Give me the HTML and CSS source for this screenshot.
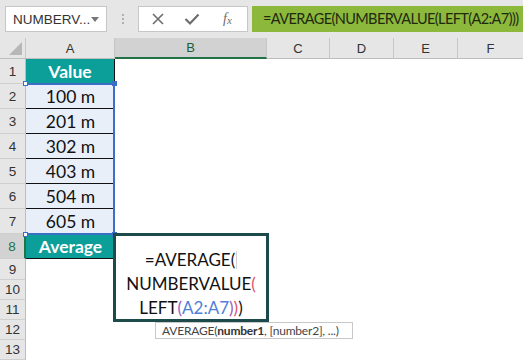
FILE: index.html
```html
<!DOCTYPE html>
<html>
<head>
<meta charset="utf-8">
<link rel="stylesheet" href="styles.css">
</head>
<body>
<div class="app">
  <div class="toolbar">
    <div class="namebox"><span class="nb-text">NUMBERV...</span><span class="nb-arrow"></span></div>
    <div class="grip"><i></i><i></i><i></i></div>
    <div class="iconbox">
      <svg class="ic" width="14" height="14" viewBox="0 0 14 14"><path d="M2 2 L12 12 M12 2 L2 12" stroke="#6d6d6d" stroke-width="1.6" fill="none"/></svg>
      <svg class="ic" width="16" height="14" viewBox="0 0 16 14"><path d="M1.5 7 L6 11.5 L14.5 2.5" stroke="#6d6d6d" stroke-width="2.2" fill="none"/></svg>
      <span class="fx">f<sub>x</sub></span>
    </div>
    <div class="formula">=AVERAGE(NUMBERVALUE(LEFT(A2:A7)))</div>
  </div>
  <div class="sheet">
    <div class="grid">
      <div class="ch corner"><span class="tri"></span></div><div class="ch">A</div><div class="ch active">B</div><div class="ch">C</div><div class="ch">D</div><div class="ch">E</div><div class="ch last">F</div>

      <div class="rh">1</div><div class="c a head hr">Value</div><div class="c"></div><div class="c"></div><div class="c"></div><div class="c"></div><div class="c"></div>
      <div class="rh">2</div><div class="c a data line">100 m</div><div class="c"></div><div class="c"></div><div class="c"></div><div class="c"></div><div class="c"></div>
      <div class="rh">3</div><div class="c a data line">201 m</div><div class="c"></div><div class="c"></div><div class="c"></div><div class="c"></div><div class="c"></div>
      <div class="rh">4</div><div class="c a data line">302 m</div><div class="c"></div><div class="c"></div><div class="c"></div><div class="c"></div><div class="c"></div>
      <div class="rh">5</div><div class="c a data line">403 m</div><div class="c"></div><div class="c"></div><div class="c"></div><div class="c"></div><div class="c"></div>
      <div class="rh">6</div><div class="c a data line">504 m</div><div class="c"></div><div class="c"></div><div class="c"></div><div class="c"></div><div class="c"></div>
      <div class="rh">7</div><div class="c a data">605 m</div><div class="c"></div><div class="c"></div><div class="c"></div><div class="c"></div><div class="c"></div>
      <div class="rh active">8</div><div class="c a head line">Average</div><div class="c"></div><div class="c"></div><div class="c"></div><div class="c"></div><div class="c"></div>
      <div class="rh">9</div><div class="c"></div><div class="c"></div><div class="c"></div><div class="c"></div><div class="c"></div><div class="c"></div>
      <div class="rh">10</div><div class="c"></div><div class="c"></div><div class="c"></div><div class="c"></div><div class="c"></div><div class="c"></div>
      <div class="rh">11</div><div class="c"></div><div class="c"></div><div class="c"></div><div class="c"></div><div class="c"></div><div class="c"></div>
      <div class="rh">12</div><div class="c"></div><div class="c"></div><div class="c"></div><div class="c"></div><div class="c"></div><div class="c"></div>
      <div class="rh">13</div><div class="c"></div><div class="c"></div><div class="c"></div><div class="c"></div><div class="c"></div><div class="c"></div>
    </div>

    <div class="sel">
      <span class="hd tl"></span><span class="hd tr"></span><span class="hd bl"></span><span class="hd br"></span>
    </div>

    <div class="editbox">
      <div class="eline">=AVERAGE(<span class="caret"></span></div>
      <div class="eline">NUMBERVALUE<span class="p-red">(</span></div>
      <div class="eline">LEFT<span class="p-purple">(</span><span class="ref">A2:A7</span><span class="p-purple">)</span><span class="p-red">)</span>)</div>
    </div>

    <div class="tip">AVERAGE(<b>number1</b>, [number2], ...)</div>
  </div>
</div>
</body>
</html>
```

FILE: styles.css
```css
* { box-sizing: border-box; }
html, body { margin: 0; padding: 0; }
body {
  width: 523px;
  height: 360px;
  overflow: hidden;
  background: #ffffff;
  font-family: "Lato", "Liberation Sans", sans-serif;
}
.app { width: 523px; height: 360px; display: flex; flex-direction: column; }

.toolbar {
  height: 40px;
  background: #e6e6e6;
  display: flex;
  align-items: flex-start;
  padding-top: 6px;
  padding-left: 5px;
}
.namebox {
  width: 102px;
  height: 26px;
  background: #fff;
  border: 1px solid #c6c6c6;
  display: flex;
  align-items: center;
  padding-left: 7px;
  font-family: "Liberation Sans", sans-serif;
  font-size: 13.5px;
  color: #333;
}
.nb-text { flex: 1; }
.nb-arrow {
  width: 0; height: 0;
  border-left: 4px solid transparent;
  border-right: 4px solid transparent;
  border-top: 5px solid #777;
  margin-right: 7px;
}
.grip {
  width: 31px;
  height: 26px;
  display: flex;
  flex-direction: column;
  align-items: center;
  justify-content: center;
  gap: 2px;
}
.grip i { display: block; width: 2px; height: 2px; background: #b0b0b0; }
.iconbox {
  width: 110px;
  height: 26px;
  background: #fff;
  border: 1px solid #c6c6c6;
  display: flex;
  align-items: center;
  padding-left: 12px;
}
.ic { display: block; }
.iconbox .ic:first-child { margin-right: 19px; }
.iconbox .ic:nth-child(2) { margin-right: 23px; }
.fx {
  font-family: "Liberation Serif", serif;
  font-style: italic;
  font-size: 14px;
  color: #6d6d6d;
  line-height: 1;
}
.fx sub { font-size: 11px; vertical-align: -1px; }
.formula {
  flex: 1;
  height: 26px;
  margin-left: 4px;
  background: #8cb83c;
  color: #1e2a10;
  font-family: "Lato", sans-serif;
  font-size: 14.5px;
  letter-spacing: -0.6px;
  line-height: 26px;
  padding-left: 11px;
  white-space: nowrap;
  overflow: hidden;
}

.sheet { position: relative; flex: 1; }
.grid {
  display: grid;
  grid-template-columns: 26px 89px 152px 63px 64px 64px 65px;
  grid-template-rows: 21px repeat(8, 25px) 21px repeat(4, 20px);
}
.ch {
  background: #e6e6e6;
  border-right: 1px solid #c6c6c6;
  border-bottom: 1px solid #bdbdbd;
  font-family: "Liberation Sans", sans-serif;
  font-size: 13px;
  color: #333;
  display: flex;
  align-items: center;
  justify-content: center;
}
.ch.last { border-right: none; }
.ch.active {
  background: #d2d2d2;
  border-bottom: 2px solid #217346;
  color: #1b5e3a;
}
.corner { position: relative; }
.tri {
  position: absolute;
  right: 3px; bottom: 3px;
  width: 0; height: 0;
  border-left: 13px solid transparent;
  border-bottom: 13px solid #b7b7b7;
}
.rh {
  background: #e6e6e6;
  border-right: 1px solid #bdbdbd;
  border-bottom: 1px solid #cfcfcf;
  font-family: "Liberation Sans", sans-serif;
  font-size: 13.5px;
  color: #333;
  display: flex;
  align-items: center;
  justify-content: center;
}
.rh.active {
  background: #d2d2d2;
  color: #217346;
  border-right: 2px solid #217346;
}
.c { background: #fff; }
.a {
  display: flex;
  align-items: center;
  justify-content: center;
  font-size: 17.5px;
  color: #111;
}
.head {
  background: #0c9e98;
  color: #fff;
  font-weight: 700;
}
.hr { border-right: 1px solid #111; }
.data { background: #e8eff9; }
.line { border-bottom: 1.5px solid #111; }

.sel {
  position: absolute;
  left: 25px;
  top: 45px;
  width: 90px;
  height: 152px;
  border-top: 2px solid #3b6fc7;
  border-right: 2px solid #3b6fc7;
  border-bottom: 2px solid #3b6fc7;
  pointer-events: none;
}
.hd {
  position: absolute;
  width: 5px; height: 5px;
  border: 1px solid #3b6fc7;
  background: #fff;
}
.hd.tl { left: -2px; top: -4px; }
.hd.bl { left: -2px; bottom: -4px; }
.hd.tr { right: -4px; top: -4px; background: #3b6fc7; }
.hd.br { right: -4px; bottom: -4px; background: #3b6fc7; }

.editbox {
  position: absolute;
  left: 113px;
  top: 195px;
  width: 156px;
  height: 89px;
  background: #fff;
  border: 3px solid #1d4b4b;
  padding-top: 12px;
  text-align: center;
  font-size: 17px;
  line-height: 24px;
  color: #111;
}
.eline { white-space: nowrap; }
.caret {
  display: inline-block;
  width: 1px;
  height: 18px;
  background: #d0d0d0;
  vertical-align: -3px;
  margin-left: 1px;
}
.p-red { color: #e0506e; }
.p-purple { color: #9b5bc7; }
.ref { color: #4f7fd8; }

.tip {
  position: absolute;
  left: 155px;
  top: 284px;
  width: 198px;
  height: 17px;
  background: #fff;
  border: 1px solid #c8c8c8;
  font-family: "Lato", sans-serif;
  font-size: 12px;
  letter-spacing: -0.2px;
  line-height: 15px;
  color: #444;
  padding-left: 6px;
  white-space: nowrap;
}
.tip b { color: #333; }
```
